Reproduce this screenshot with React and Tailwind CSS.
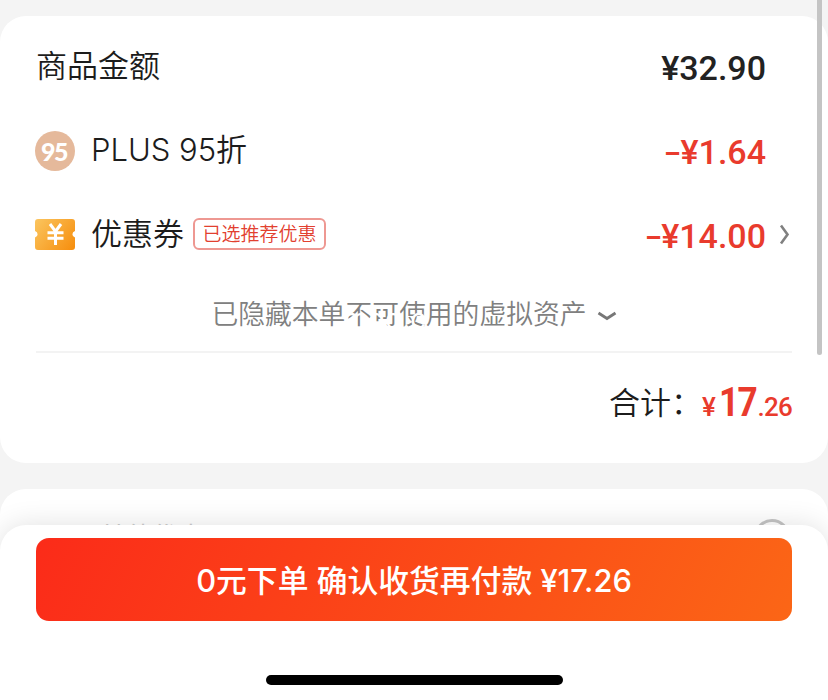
const rows = [
  { label: "商品金额", amount: "¥32.90", color: "text-[#222]" },
  { label: "PLUS 95折", amount: "¥1.64", minus: true, color: "text-[#e93b2d]", icon: "plus" },
  {
    label: "优惠券",
    amount: "¥14.00",
    minus: true,
    color: "text-[#e93b2d]",
    icon: "coupon",
    tag: "已选推荐优惠",
    arrow: true,
  },
];

function PlusIcon() {
  return (
    <div className="w-10 h-10 mr-4 -ml-px mt-px rounded-full bg-[#e5b99b] text-white flex items-center justify-center font-[Lato,sans-serif] font-black text-[25px] leading-none tracking-[-1.5px] pt-0.5 pr-0.5">
      95
    </div>
  );
}

function CouponIcon() {
  return (
    <svg className="w-10 h-8 mr-4 -ml-px" viewBox="0 0 40 32" fill="none">
      <defs>
        <linearGradient id="coupon" x1="0" y1="0" x2="40" y2="32" gradientUnits="userSpaceOnUse">
          <stop stopColor="#fbc660" />
          <stop offset="1" stopColor="#f68d0c" />
        </linearGradient>
      </defs>
      <path
        d="M3 1H37Q40 1 40 4V13A3.4 3.4 0 0 0 40 19.6V29Q40 32 37 32H3Q0 32 0 29V19.6A3.4 3.4 0 0 0 0 13V4Q0 1 3 1Z"
        fill="url(#coupon)"
      />
      <path d="M15 6L20.5 13.5L26 6M12.5 14.8H28.5M12.5 20.2H28.5M20.5 13V27" stroke="#fff" strokeWidth="3" />
    </svg>
  );
}

function PriceRow({ row }) {
  return (
    <div className="h-[84px] flex items-center">
      {row.icon === "plus" && <PlusIcon />}
      {row.icon === "coupon" && <CouponIcon />}
      <span className="text-[31px] leading-[44px] font-[350] text-[#1c1c1c] whitespace-nowrap">{row.label}</span>
      {row.tag && (
        <span className="ml-[9px] h-8 w-[133px] rounded-md border-2 border-[#ee9892] flex items-center justify-center text-[19px] leading-none font-[350] text-[#e2402f] whitespace-nowrap">
          {row.tag}
        </span>
      )}
      <span
        className={`ml-auto pt-1 font-[Roboto,sans-serif] font-medium text-[34px] leading-[40px] ${row.color} ${row.arrow ? "" : "mr-[26px]"}`}
      >
        {row.minus && <span className="inline-block scale-x-150 mr-0.5">-</span>}
        {row.amount}
      </span>
      {row.arrow && (
        <svg className="w-[26px] h-6 shrink-0" viewBox="0 0 26 24" fill="none">
          <path d="M15 3.5L21.5 12.5L15 21.5" stroke="#808080" strokeWidth="2.6" />
        </svg>
      )}
    </div>
  );
}

export default function App() {
  return (
    <div className="relative w-[828px] h-[700px] overflow-hidden bg-[#f4f4f4] pt-4 font-[Inter,'Noto_Sans_CJK_SC',sans-serif]">
      <div className="h-[447px] bg-white rounded-[26px] px-9 pt-2">
        {rows.map((row) => (
          <PriceRow key={row.label} row={row} />
        ))}

        <div className="h-[77px] flex items-center justify-center border-b-2 border-[#f3f3f3]">
          <span className="relative text-[26.8px] leading-[40px] text-[#808080] font-[350] whitespace-nowrap">
            已隐藏本单不可使用的虚拟资产
            <span className="absolute left-[132px] top-[5px] text-white font-normal text-[28px] leading-[40px]">
              mdd.c
            </span>
          </span>
          <svg className="w-5 h-3 ml-2.5 mt-1" viewBox="0 0 20 12" fill="none">
            <path d="M1.5 3L10 8.5L18.5 3" stroke="#777" strokeWidth="2.8" />
          </svg>
        </div>

        <div className="h-[100px] flex items-center justify-end">
          <span className="text-[31px] leading-[44px] font-[350] text-[#1c1c1c]">合计：</span>
          <span className="font-[Roboto,sans-serif] font-medium text-[#e93b2d] flex items-baseline">
            <span className="text-[26px]">¥</span>
            <span className="text-[40px] font-bold inline-block origin-right scale-x-[0.88] -ml-0.5 tracking-[-2px] mr-0.5">17</span>
            <span className="text-[26px] tracking-[-0.8px]">.26</span>
          </span>
        </div>
      </div>

      <div className="mt-[26px] h-[120px] bg-white rounded-[26px] px-9 pt-[30px] flex justify-between">
        <span className="-mt-[2px] pl-16 text-[26px] leading-[40px] text-[#ccc]">其他优惠</span>
        <div className="w-9 h-9 mr-[2px] rounded-full border-[3px] border-[#c4c4c4]" />
      </div>

      {/* pay bar */}
      <div className="absolute left-0 bottom-0 w-full h-[175px] bg-white rounded-t-[26px] shadow-[0_0_28px_rgba(0,0,0,0.12)] px-9 pt-[13px] flex flex-col items-center">
        <button className="w-full h-[83px] pt-1 rounded-[13px] bg-linear-[115deg] from-[#fb2b19] to-[#fb6616] text-white text-[30.8px] font-medium whitespace-nowrap">
          0元下单 确认收货再付款 ¥17.26
        </button>
        <div className="mt-[54px] w-[297px] h-[10px] rounded-full bg-black" />
      </div>

      {/* scrollbar */}
      <div className="absolute right-[6px] top-0 w-[5px] h-[355px] rounded-b-full bg-[#c4c4c4]" />
    </div>
  );
}
